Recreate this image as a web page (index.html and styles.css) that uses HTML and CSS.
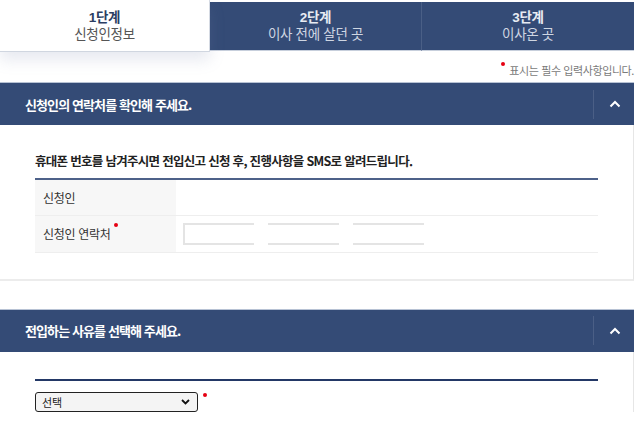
FILE: index.html
```html
<!DOCTYPE html>
<html lang="ko">
<head>
<meta charset="utf-8">
<link rel="stylesheet" href="styles.css">
</head>
<body>
<div class="page">
  <div class="tabs">
    <div class="tab active"><strong>1단계</strong><span>신청인정보</span></div>
    <div class="tab"><strong>2단계</strong><span>이사 전에 살던 곳</span></div>
    <div class="tab last"><strong>3단계</strong><span>이사온 곳</span></div>
  </div>
  <p class="note"><i class="req"></i>표시는 필수 입력사항입니다.</p>

  <section class="panel">
    <div class="panel-head">
      <h2>신청인의 연락처를 확인해 주세요.</h2>
      <button class="toggle" type="button"><svg width="12" height="8" viewBox="0 0 12 8"><polyline points="1.5,6.5 6,2 10.5,6.5" fill="none" stroke="#fff" stroke-width="2"/></svg></button>
    </div>
    <div class="panel-body">
      <h3 class="sub-title">휴대폰 번호를 남겨주시면 전입신고 신청 후, 진행사항을 SMS로 알려드립니다.</h3>
      <table class="form-table">
        <tr><th>신청인</th><td></td></tr>
        <tr><th>신청인 연락처<i class="req th-req"></i></th>
          <td><div class="phone"><span class="in first"></span><span class="in"></span><span class="in"></span></div></td></tr>
      </table>
    </div>
  </section>

  <section class="panel second">
    <div class="panel-head">
      <h2>전입하는 사유를 선택해 주세요.</h2>
      <button class="toggle" type="button"><svg width="12" height="8" viewBox="0 0 12 8"><polyline points="1.5,6.5 6,2 10.5,6.5" fill="none" stroke="#fff" stroke-width="2"/></svg></button>
    </div>
    <div class="panel-body body2">
      <div class="line"></div>
      <div class="sel-row">
        <div class="select"><span>선택</span><svg width="9" height="6" viewBox="0 0 9 6"><polyline points="1,1 4.5,4.5 8,1" fill="none" stroke="#111" stroke-width="1.8"/></svg></div>
        <i class="req"></i>
      </div>
    </div>
  </section>
</div>
</body>
</html>
```

FILE: styles.css
```css
* { box-sizing: border-box; }
html, body { margin: 0; padding: 0; background: #fff; }
body { font-family: "Noto Sans CJK KR", "Noto Sans", sans-serif; color: #222; overflow: hidden; }
.page { width: 634px; }

.tabs { display: flex; height: 52px; align-items: flex-start; }
.tab {
  flex: 0 0 212px; height: 49px; margin-top: 2px;
  background: #344b76; color: #fff;
  display: flex; flex-direction: column; align-items: center; justify-content: center;
  border-bottom: 1px solid #c7cfdc;
  border-right: 1px solid #4a5f86;
  font-family: "Liberation Sans", "Noto Sans CJK KR", sans-serif;
  line-height: 17px;
}
.tab.last { border-right: 0; }
.tab strong { display: block; font-size: 13.5px; line-height: 17px; font-weight: 700; color: #e8ecf3; letter-spacing: -0.3px; }
.tab span { display: block; font-size: 13.5px; line-height: 17px; color: #cfd6e2; letter-spacing: -0.3px; }
.tab.active {
  flex: 0 0 210px; height: 52px; margin-top: 0;
  background: #fff; border-right: 1px solid #d5dae3; border-bottom: 1px solid #d0d6e0;
  box-shadow: 0 8px 14px rgba(120,135,170,0.18);
  position: relative; z-index: 1;
}
.tab.active strong { color: #2b3d62; }
.tab.active span { color: #555; }

.note {
  margin: 0; height: 30px; text-align: right;
  font-size: 11px; color: #7a7a7a; line-height: 14px; padding-top: 11px;
  letter-spacing: -0.4px;
}
.req {
  display: inline-block; width: 4px; height: 4px; border-radius: 50%;
  background: #e60012; vertical-align: top; margin-right: 4px;
}
.note .req { margin-top: -1px; }

.panel { border-right: 1px solid #e6e6e6; border-bottom: 2px solid #ececec; }
.panel-head {
  height: 43px; background: #344b76; border-top: 1px solid #b7c2d4;
  display: flex; align-items: center; justify-content: space-between;
  margin-right: -1px;
}
.panel-head h2 {
  margin: 0 0 0 25px; font-size: 13px; font-weight: 700; color: #fff; letter-spacing: -0.9px;
}
.toggle {
  width: 41px; height: 29px; background: none; border: 0; border-left: 1px solid #4b5f86;
  padding: 0; display: flex; align-items: center; justify-content: center; padding-left: 1px;
}

.panel-body { padding: 26px 35px 26px 35px; }
.sub-title {
  margin: 0; font-size: 12.5px; font-weight: 700; color: #222; letter-spacing: -0.7px;
  line-height: 20px; padding-bottom: 7px; border-bottom: 2px solid #4d6189;
}
.form-table { width: 100%; border-collapse: collapse; font-size: 12px; color: #333; }
.form-table th {
  width: 141px; background: #f7f7f7; text-align: left; font-weight: 400;
  padding: 0 0 0 8px; letter-spacing: -0.3px; border-bottom: 1px solid #eeeeee;
}
.form-table td { border-bottom: 1px solid #eeeeee; padding: 0 0 0 7px; }
.form-table tr:first-child th, .form-table tr:first-child td { height: 35px; }
.form-table tr:last-child th, .form-table tr:last-child td { height: 37px; }
.th-req { margin: -2px 0 0 3px; }
.phone { display: flex; gap: 14px; }
.in {
  display: block; width: 71px; height: 22px;
  border-top: 2px solid #e4e4e4; border-bottom: 2px solid #e4e4e4;
}
.in.first { border-left: 2px solid #e4e4e4; }

.panel.second { margin-top: 28px; border-bottom: 0; }
.body2 { padding: 27px 35px 0 35px; }
.line { height: 2px; background: #233866; }
.sel-row { display: flex; align-items: flex-start; padding-top: 11px; }
.select {
  width: 163px; height: 20px; border: 1px solid #222; border-radius: 3px;
  background: #f4f4f4; display: flex; align-items: center; justify-content: space-between;
  padding: 0 7px 0 6px; font-size: 11px; color: #222;
}
.sel-row .req { margin: 1px 0 0 5px; }
```
